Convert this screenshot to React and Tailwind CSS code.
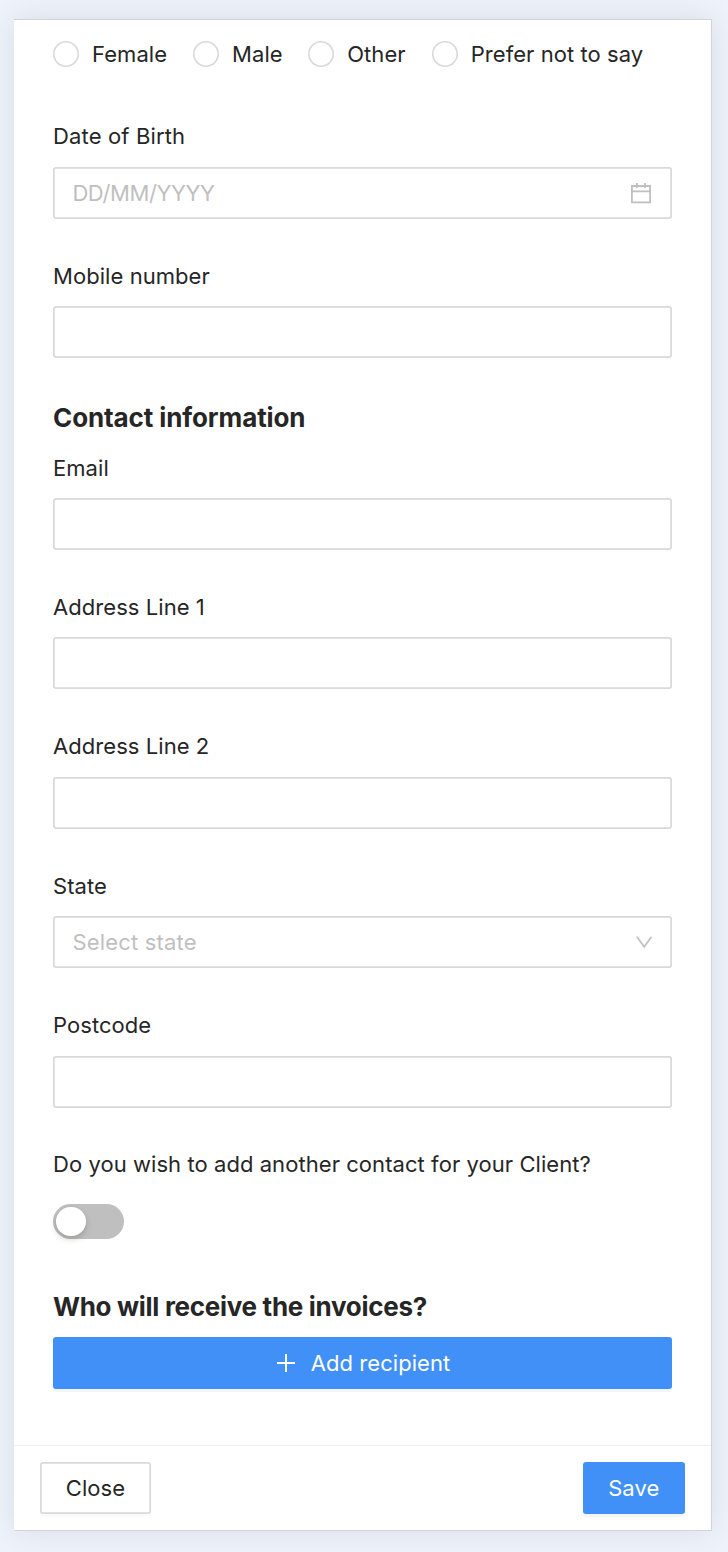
import React from "react";

function Radio({ label, className = "" }) {
  return (
    <label className={"flex items-center " + className}>
      <span className="block h-[26px] w-[26px] shrink-0 rounded-full bg-white shadow-[inset_0_0_0_1.6px_#d9d9d9]" />
      <span className="ml-[13px] whitespace-nowrap">{label}</span>
    </label>
  );
}

function Field({ label, placeholder, icon, className = "", textClass = "", height = "h-[94.6px]" }) {
  return (
    <div className={"flex shrink-0 flex-col justify-between " + height + " " + className}>
      <div className="flex h-6 items-center whitespace-nowrap">{label}</div>
      <div className="flex h-[52px] items-center justify-between rounded-[3px] bg-white px-[19.4px] text-[#bfbfbf] shadow-[inset_0_0_0_1.7px_#d9d9d9]">
        <span className={textClass}>{placeholder}</span>
        {icon}
      </div>
    </div>
  );
}

function CalendarIcon() {
  return (
    <svg className="h-[26px] w-[24px]" viewBox="0 0 24 26" fill="none" stroke="#bfbfbf" strokeWidth="1.8">
      <path d="M2.9 6h18.2v16.3H2.9zM2.9 11.3h18.2" />
      <path d="M7.9 3v5M16.1 3v5" />
    </svg>
  );
}

function DownIcon() {
  return (
    <svg className="h-5 w-[18px]" viewBox="0 0 18 20" fill="none" stroke="#bfbfbf" strokeWidth="1.7">
      <path d="M1.9 4.8 9.2 14.8 16.5 4.8" />
    </svg>
  );
}

export default function App() {
  return (
    <div className="flex h-[1552px] w-[728px] overflow-hidden bg-[#edf2fb] pt-[19px] pl-[14px] font-['Inter',sans-serif] text-[22px] leading-6 tracking-[0.06px] text-[#262626]">
      <div className="flex h-[1512px] w-[698px] flex-col border-t border-r border-b border-[#d2d3d8] bg-white shadow-[0_0_28px_rgba(0,0,0,0.09)]">
        <div className="flex h-[1425px] flex-col pr-[39px] pl-[39px]">
          <div className="mt-[21px] flex h-[26px] items-center">
            <Radio label="Female" />
            <Radio label="Male" className="ml-[26px]" />
            <Radio label="Other" className="ml-[25.5px]" />
            <Radio label="Prefer not to say" className="ml-[26px]" />
          </div>
          <Field label="Date of Birth" placeholder="DD/MM/YYYY" textClass="tracking-[-0.4px]" icon={<CalendarIcon />} className="mt-[57.4px] tracking-[0.15px]" />
          <Field label="Mobile number" className="mt-[44.8px]" />
          <h2 className="mt-[44px] flex h-8 shrink-0 items-center text-[26px] font-bold tracking-[-0.1px] whitespace-nowrap">Contact information</h2>
          <Field label="Email" height="h-[94px]" className="mt-[21.6px]" />
          <Field label="Address Line 1" className="mt-[44.8px]" />
          <Field label="Address Line 2" className="mt-[44.8px]" />
          <Field label="State" placeholder="Select state" textClass="tracking-[0.18px]" icon={<DownIcon />} className="mt-[44.8px]" />
          <Field label="Postcode" className="mt-[44.8px]" />
          <div className="mt-[44.4px] flex h-6 items-center whitespace-nowrap">Do you wish to add another contact for your Client?</div>
          <button className="mt-[28px] flex h-[35px] w-[71px] shrink-0 items-center rounded-full bg-[#bfbfbf] pl-[3px]" aria-label="Add another contact">
            <span className="block h-[29.5px] w-[29.5px] rounded-full bg-white shadow-[0_3px_6px_rgba(0,35,11,0.2)]" />
          </button>
          <h2 className="mt-[52px] flex h-8 shrink-0 items-center text-[26px] font-bold tracking-[-0.3px] whitespace-nowrap">Who will receive the invoices?</h2>
          <button className="mt-[14px] flex h-[52px] shrink-0 items-center justify-center rounded-[3px] bg-[#4190f7] text-white shadow-[0_3px_0_rgba(0,0,0,0.04)]">
            <svg className="mr-[16px] ml-[2px] h-5 w-[18px]" viewBox="0 0 18 20" stroke="white" strokeWidth="2">
              <path d="M0 10h18M9 1v18" />
            </svg>
            Add recipient
          </button>
        </div>
        <div className="flex h-[85px] items-start justify-between border-t-[1.5px] border-[#f0f0f0] px-[26px] pt-[16px]">
          <button className="h-[52px] w-[111px] rounded-[3px] bg-white shadow-[inset_0_0_0_1.7px_#d9d9d9,0_3px_0_rgba(0,0,0,0.015)]">Close</button>
          <button className="h-[52px] w-[102.5px] rounded-[3px] bg-[#4190f7] text-white shadow-[0_3px_0_rgba(0,0,0,0.04)]">Save</button>
        </div>
      </div>
    </div>
  );
}
